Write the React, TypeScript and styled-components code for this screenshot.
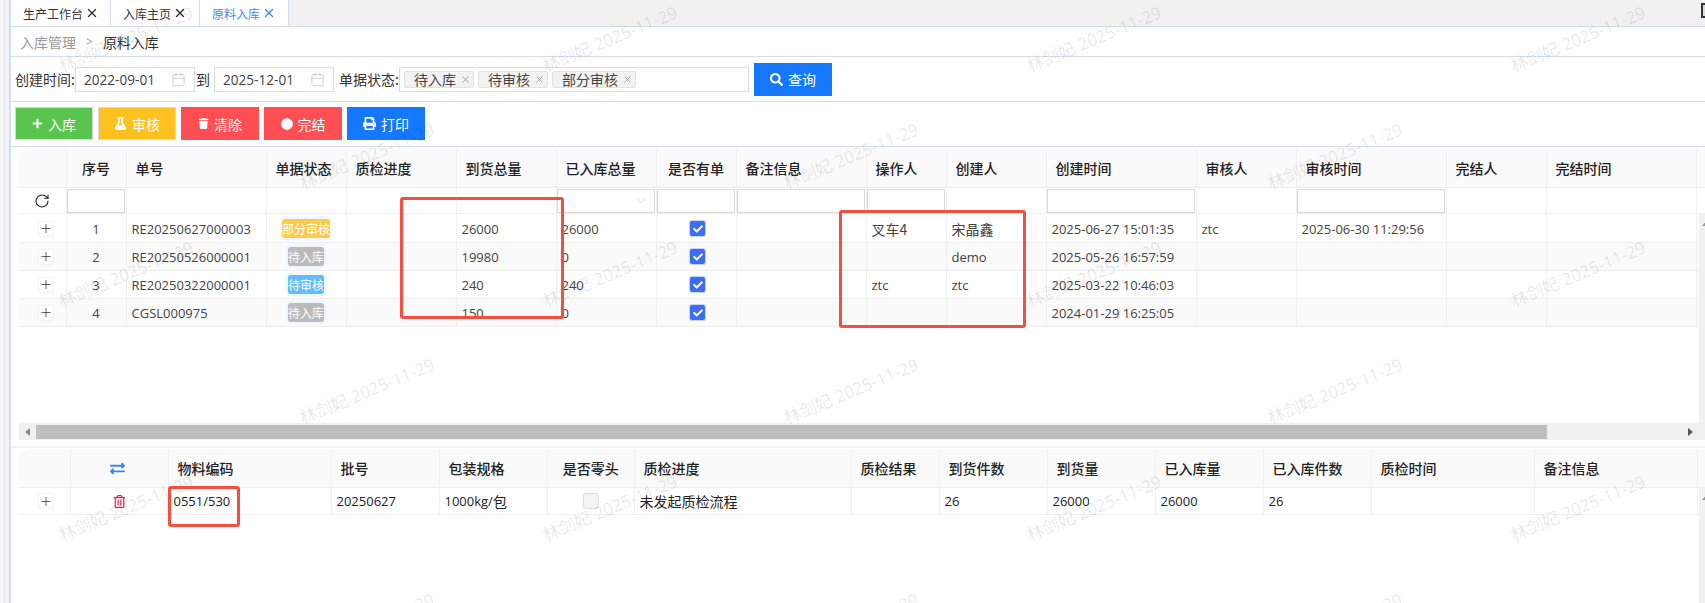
import React from 'react';
import styled, { createGlobalStyle } from 'styled-components';
import { X, Calendar, ChevronDown, RotateCw, Plus } from 'lucide-react';
import { FaPlus, FaFlask, FaTrash, FaCircle, FaPrint, FaSearch, FaExchangeAlt, FaRegTrashAlt, FaCheck } from 'react-icons/fa';

const latin = `"Open Sans", "Noto Sans CJK SC", sans-serif`;
const han = `"Noto Sans CJK SC", "Open Sans", sans-serif`;

const Global = createGlobalStyle`
  html, body { margin: 0; padding: 0; background: #fff; }
  body { font-family: ${latin}; color: #333; }
  * { box-sizing: border-box; }
`;

const Page = styled.div`
  position: relative;
  display: flex;
  width: 1705px;
  height: 603px;
  overflow: hidden;
`;
const Rail = styled.div`
  width: 9px;
  flex: none;
  background: linear-gradient(90deg, #f6f6f6 0 4px, #e3e8ef 4px 5px, #f4f6f9 5px 9px);
`;
const Main = styled.div`
  flex: 1;
  min-width: 0;
  display: flex;
  flex-direction: column;
  border-left: 2px solid #d3deeb;
`;
const TabBar = styled.div`
  display: flex;
  height: 27px;
  flex: none;
  background: #f1f1f1;
  border-bottom: 1px solid #d3deeb;
`;
const Tab = styled.div<{ $w: number; $active?: boolean }>`
  width: ${p => p.$w}px;
  display: flex;
  align-items: center;
  gap: 2px;
  padding-left: 12px;
  background: #fff;
  border-right: 1px solid #d3deeb;
  font: 12px ${han};
  color: ${p => (p.$active ? '#4a86e8' : '#333')};
`;
const WindowIcon = styled.div`
  margin-left: auto;
  margin-top: 3px;
  width: 4px;
  height: 15px;
  background: #dcdcdc;
  border: 2px solid #333;
  border-right: 0;
`;
const Breadcrumb = styled.div`
  display: flex;
  align-items: center;
  height: 30px;
  flex: none;
  padding-left: 9px;
  border-bottom: 1px solid #d3deeb;
  font: 14px ${han};
`;
const CrumbLink = styled.span`
  color: #999;
`;
const CrumbSep = styled.span`
  color: #999;
  font: 12px ${latin};
  margin: 0 10px;
`;
const CrumbNow = styled.span`
  color: #333;
`;
const FilterBar = styled.div`
  display: flex;
  align-items: center;
  height: 45px;
  flex: none;
  padding-left: 4px;
  border-bottom: 1px solid #d3deeb;
`;
const FilterLabel = styled.span<{ $w: number; $pl?: number }>`
  width: ${p => p.$w}px;
  padding-left: ${p => p.$pl ?? 0}px;
  flex: none;
  font: 14px ${han};
  color: #333;
  white-space: nowrap;
`;
const DateInput = styled.div`
  width: 120px;
  height: 25px;
  flex: none;
  display: flex;
  align-items: center;
  justify-content: space-between;
  padding: 0 8px;
  border: 1px solid #dcdcdc;
  font: 13.6px ${latin};
  color: #444;
  svg { color: #c4c4c4; }
`;
const TagSelect = styled.div`
  width: 350px;
  height: 25px;
  flex: none;
  display: flex;
  align-items: center;
  gap: 4px;
  padding-left: 4px;
  border: 1px solid #dcdcdc;
`;
const Tag = styled.span`
  display: flex;
  align-items: center;
  justify-content: space-between;
  height: 17px;
  padding: 0 2px 0 9px;
  gap: 4px;
  background: #f2f2f2;
  border: 1px solid #e2e2e2;
  border-radius: 2px;
  font: 14px ${han};
  color: #444;
  svg { color: #777; }
`;
const Btn = styled.button<{ $bg: string; $edge?: boolean }>`
  width: 78px;
  height: 33px;
  flex: none;
  display: flex;
  align-items: center;
  justify-content: center;
  gap: 5px;
  padding: 0;
  background: ${p => p.$bg};
  border: ${p => (p.$edge ? '1px solid #d8d8d8' : '0')};
  color: #fff;
  font: 14px ${han};
`;
const SearchBtn = styled(Btn)`
  margin-left: 5px;
`;
const ActionBar = styled.div`
  display: flex;
  align-items: center;
  gap: 5px;
  height: 45px;
  flex: none;
  padding: 0 0 1px 4px;
  border-bottom: 1px solid #d3deeb;
`;
const Frame = styled.div<{ $h?: number; $mt: number }>`
  margin: ${p => p.$mt}px 0 0 8px;
  ${p => (p.$h ? `height: ${p.$h}px;` : 'flex: 1; min-height: 0;')}
  display: flex;
  flex-direction: column;
  border-top-left-radius: 10px;
  overflow: hidden;
`;
const Row = styled.div<{ $cols: string; $h: number; $alt?: boolean }>`
  display: grid;
  grid-template-columns: ${p => p.$cols};
  height: ${p => p.$h}px;
  flex: none;
  background: ${p => (p.$alt ? '#fafafa' : '#fff')};
  border-bottom: 1px solid #eeeeee;
`;
const HeadRow = styled(Row)`
  background: #fafafa;
`;
const HeadCell = styled.div<{ $center?: boolean }>`
  display: flex;
  align-items: center;
  justify-content: ${p => (p.$center ? 'center' : 'flex-start')};
  padding-left: ${p => (p.$center ? 0 : 9)}px;
  border-right: 1px solid #f0f0f0;
  font: 500 14px ${han};
  color: #222;
  white-space: nowrap;
  overflow: hidden;
`;
const SwapCell = styled(HeadCell)`
  padding-right: 4px;
`;
const LastCell = styled.div``;
const FilterCell = styled.div`
  display: flex;
  align-items: center;
  justify-content: center;
  border-right: 1px solid #f0f0f0;
  padding: 1px 1px 1px 0;
`;
const FilterInput = styled.div`
  flex: 1;
  height: 24px;
  display: flex;
  align-items: center;
  justify-content: flex-end;
  padding-right: 6px;
  background: #fff;
  border: 1px solid #dbdbdb;
  svg { color: #c0c0c0; }
`;
const Cell = styled.div<{ $center?: boolean; $dark?: boolean }>`
  display: flex;
  align-items: center;
  justify-content: ${p => (p.$center ? 'center' : 'flex-start')};
  padding-left: ${p => (p.$center ? 0 : 5)}px;
  border-right: 1px solid #f0f0f0;
  font: 13px ${latin};
  color: ${p => (p.$dark ? '#222' : '#444')};
  white-space: nowrap;
  overflow: hidden;
`;
const ExpandCell = styled(Cell)`
  padding-left: 19px;
`;
const Han = styled.span`
  font: 14px ${han};
`;
const ExpandBtn = styled.span`
  width: 16px;
  height: 16px;
  display: flex;
  align-items: center;
  justify-content: center;
  border: 1px solid #f2f2f2;
  border-radius: 2px;
  background: #fff;
  color: #111;
`;
const Badge = styled.span<{ $bg: string }>`
  height: 19px;
  display: flex;
  align-items: center;
  border-radius: 3px;
  background: ${p => p.$bg};
  box-shadow: 0 0 0 2.5px #eef6fe;
  color: #fff;
  font: 12px ${han};
`;
const Check = styled.span<{ $on?: boolean }>`
  width: ${p => (p.$on ? 17 : 16)}px;
  height: ${p => (p.$on ? 17 : 16)}px;
  display: flex;
  align-items: center;
  justify-content: center;
  border-radius: 3px;
  margin-left: ${p => (p.$on ? 3 : 0)}px;
  background: ${p => (p.$on ? '#3b6df5' : '#f3f3f3')};
  border: 1px solid ${p => (p.$on ? '#c6d3f7' : '#dcdcdc')};
  color: #fff;
`;
const BodyWrap = styled.div`
  flex: 1;
  min-height: 0;
  display: flex;
`;
const BodyRows = styled.div<{ $pt?: number }>`
  flex: 1;
  min-width: 0;
  padding-top: ${p => p.$pt ?? 0}px;
`;
const VBar = styled.div`
  width: 6px;
  flex: none;
  background: #f1f1f1;
  overflow: hidden;
`;
const UpArrow = styled.div`
  margin: 7px 0 0 3px;
  width: 0;
  height: 0;
  border-left: 4px solid transparent;
  border-right: 4px solid transparent;
  border-bottom: 5px solid #999;
`;
const HBar = styled.div`
  height: 17px;
  flex: none;
  display: flex;
  align-items: center;
  background: #f1f1f1;
`;
const HButton = styled.div<{ $right?: boolean }>`
  width: 17px;
  flex: none;
  display: flex;
  justify-content: center;
  margin-left: ${p => (p.$right ? 'auto' : '0')};
  margin-right: ${p => (p.$right ? '6px' : '0')};
`;
const Tri = styled.span<{ $right?: boolean }>`
  width: 0;
  height: 0;
  border-top: 4.5px solid transparent;
  border-bottom: 4.5px solid transparent;
  ${p => (p.$right ? 'border-left: 5px solid #555;' : 'border-right: 5px solid #888;')}
`;
const HThumb = styled.div`
  width: 1511px;
  height: 14px;
  background: #bfbfbf;
`;
const Divider = styled.div`
  height: 2px;
  flex: none;
  margin: 6px 0 1px;
  background: #f1f1f1;
`;
const Marks = styled.div`
  position: absolute;
  inset: 0;
  pointer-events: none;
`;
const Mark = styled.span.attrs<{ $x: number; $y: number }>(p => ({
  style: { left: p.$x, top: p.$y - 24 },
}))<{ $x: number; $y: number }>`
  position: absolute;
  height: 24px;
  transform-origin: left bottom;
  transform: rotate(-22.5deg);
  font: 17px/24px ${latin};
  white-space: nowrap;
  color: rgba(0, 0, 0, 0.1);
`;
const Note = styled.div.attrs<{ $x: number; $y: number; $w: number; $h: number }>(p => ({
  style: { left: p.$x, top: p.$y, width: p.$w, height: p.$h },
}))<{ $x: number; $y: number; $w: number; $h: number }>`
  position: absolute;
  border: 3px solid #f44e3f;
  border-radius: 3px;
  pointer-events: none;
`;

const topCols = '47.5px 60px 140px 80px 110px 100px 100px 80px 130px 80px 100px 150px 100px 150px 100px 150px 1fr';
const subCols = '51.5px 98px 163px 108px 108.5px 86.5px 217px 88px 108px 108px 108px 108px 163px 163px 1fr';

const topHead = ['序号', '单号', '单据状态', '质检进度', '到货总量', '已入库总量', '是否有单', '备注信息', '操作人', '创建人', '创建时间', '审核人', '审核时间', '完结人', '完结时间'];
const subHead = ['物料编码', '批号', '包装规格', '是否零头', '质检进度', '质检结果', '到货件数', '到货量', '已入库量', '已入库件数', '质检时间', '备注信息'];

const filterShape = [
  'input', '', '', '', '', 'select', 'input', 'input', 'input', '', 'input', '', 'input', '', '',
];

type Rec = { no: number; code: string; status: string; color: string; total: string; done: string; op: string; opHan?: boolean; by: string; byHan?: boolean; at: string; audit: string; auditAt: string };
const records: Rec[] = [
  { no: 1, code: 'RE20250627000003', status: '部分审核', color: '#fdcb4a', total: '26000', done: '26000', op: '叉车4', opHan: true, by: '宋晶鑫', byHan: true, at: '2025-06-27 15:01:35', audit: 'ztc', auditAt: '2025-06-30 11:29:56' },
  { no: 2, code: 'RE20250526000001', status: '待入库', color: '#bbbbbb', total: '19980', done: '0', op: '', by: 'demo', at: '2025-05-26 16:57:59', audit: '', auditAt: '' },
  { no: 3, code: 'RE20250322000001', status: '待审核', color: '#62bcff', total: '240', done: '240', op: 'ztc', by: 'ztc', at: '2025-03-22 10:46:03', audit: '', auditAt: '' },
  { no: 4, code: 'CGSL000975', status: '待入库', color: '#bbbbbb', total: '150', done: '0', op: '', by: '', at: '2024-01-29 16:25:05', audit: '', auditAt: '' },
];

const subRow: React.ReactNode[] = [
  '20250627',
  <>1000kg/<Han>包</Han></>,
];

const centeredHead = (t: string) => t === '序号' || t === '是否有单' || t === '是否零头';

const watermarks: { x: number; y: number }[] = [];
for (let k = 0; k < 6; k++) {
  const columns = k % 2 ? [305, 789, 1273] : [64, 548, 1032, 1516];
  for (const x of columns) {
    watermarks.push({ x, y: 78 + 117.3 * k });
  }
}

export default function App() {
  return (
    <Page>
      <Global />
      <Rail />
      <Main>
        <TabBar>
          <Tab $w={100}>生产工作台 <X size={14} strokeWidth={2.4} /></Tab>
          <Tab $w={89}>入库主页 <X size={14} strokeWidth={2.4} /></Tab>
          <Tab $w={89} $active>原料入库 <X size={14} strokeWidth={2.4} /></Tab>
          <WindowIcon />
        </TabBar>
        <Breadcrumb>
          <CrumbLink>入库管理</CrumbLink>
          <CrumbSep>&gt;</CrumbSep>
          <CrumbNow>原料入库</CrumbNow>
        </Breadcrumb>
        <FilterBar>
          <FilterLabel $w={60}>创建时间:</FilterLabel>
          <DateInput>2022-09-01<Calendar size={15} strokeWidth={1.2} /></DateInput>
          <FilterLabel $w={19} $pl={1}>到</FilterLabel>
          <DateInput>2025-12-01<Calendar size={15} strokeWidth={1.2} /></DateInput>
          <FilterLabel $w={65} $pl={5}>单据状态:</FilterLabel>
          <TagSelect>
            <Tag>待入库<X size={11} strokeWidth={1.4} /></Tag>
            <Tag>待审核<X size={11} strokeWidth={1.4} /></Tag>
            <Tag>部分审核<X size={11} strokeWidth={1.4} /></Tag>
          </TagSelect>
          <SearchBtn $bg="#1677ff"><FaSearch size={13} />查询</SearchBtn>
        </FilterBar>
        <ActionBar>
          <Btn $bg="#5ac54e" $edge><FaPlus size={11} />入库</Btn>
          <Btn $bg="#fdc21f" $edge><FaFlask size={13} />审核</Btn>
          <Btn $bg="#ff4f55"><FaTrash size={11} />清除</Btn>
          <Btn $bg="#ff4f55"><FaCircle size={12} />完结</Btn>
          <Btn $bg="#1677ff"><FaPrint size={13} />打印</Btn>
        </ActionBar>

        <Frame $h={291} $mt={2}>
          <HeadRow $cols={topCols} $h={39}>
            <HeadCell />
            {topHead.map(t => <HeadCell key={t} $center={centeredHead(t)}>{t}</HeadCell>)}
            <LastCell />
          </HeadRow>
          <Row $cols={topCols} $h={26}>
            <Cell $center><RotateCw size={16} strokeWidth={1.6} color="#222" /></Cell>
            {filterShape.map((kind, i) => (
              <FilterCell key={i}>
                {kind && <FilterInput>{kind === 'select' && <ChevronDown size={14} strokeWidth={1} />}</FilterInput>}
              </FilterCell>
            ))}
            <LastCell />
          </Row>
          <BodyWrap>
            <BodyRows $pt={1}>
              {records.map((r, i) => (
                <Row key={r.no} $cols={topCols} $h={28} $alt={i % 2 === 1}>
                  <ExpandCell><ExpandBtn><Plus size={15} strokeWidth={1.1} /></ExpandBtn></ExpandCell>
                  <Cell $center>{r.no}</Cell>
                  <Cell>{r.code}</Cell>
                  <Cell $center><Badge $bg={r.color}>{r.status}</Badge></Cell>
                  <Cell />
                  <Cell>{r.total}</Cell>
                  <Cell>{r.done}</Cell>
                  <Cell $center><Check $on><FaCheck size={10} /></Check></Cell>
                  <Cell />
                  <Cell>{r.opHan ? <Han>{r.op}</Han> : r.op}</Cell>
                  <Cell>{r.byHan ? <Han>{r.by}</Han> : r.by}</Cell>
                  <Cell>{r.at}</Cell>
                  <Cell>{r.audit}</Cell>
                  <Cell>{r.auditAt}</Cell>
                  <Cell />
                  <Cell />
                  <LastCell />
                </Row>
              ))}
            </BodyRows>
            <VBar><UpArrow /></VBar>
          </BodyWrap>
          <HBar>
            <HButton><Tri /></HButton>
            <HThumb />
            <HButton $right><Tri $right /></HButton>
          </HBar>
        </Frame>

        <Divider />

        <Frame $mt={0}>
          <HeadRow $cols={subCols} $h={39}>
            <HeadCell />
            <SwapCell $center><FaExchangeAlt size={15} color="#3b82f6" /></SwapCell>
            {subHead.map((t, i) => <HeadCell key={i} $center={centeredHead(t)}>{t}</HeadCell>)}
            <LastCell />
          </HeadRow>
          <BodyWrap>
            <BodyRows>
              <Row $cols={subCols} $h={27}>
                <ExpandCell><ExpandBtn><Plus size={15} strokeWidth={1.1} /></ExpandBtn></ExpandCell>
                <Cell $center><FaRegTrashAlt size={13} color="#ec1c4b" /></Cell>
                <Cell $dark>0551/530</Cell>
                {subRow.map((v, i) => <Cell key={i} $dark>{v}</Cell>)}
                <Cell $center><Check /></Cell>
                <Cell $dark><Han>未发起质检流程</Han></Cell>
                <Cell />
                <Cell $dark>26</Cell>
                <Cell $dark>26000</Cell>
                <Cell $dark>26000</Cell>
                <Cell $dark>26</Cell>
                <Cell />
                <Cell />
                <LastCell />
              </Row>
            </BodyRows>
            <VBar><UpArrow /></VBar>
          </BodyWrap>
        </Frame>
      </Main>

      <Marks>
        {watermarks.map((m, i) => <Mark key={i} $x={m.x} $y={m.y}>林剑妃 2025-11-29</Mark>)}
      </Marks>
      <Note $x={400} $y={196.5} $w={164} $h={122} />
      <Note $x={838.5} $y={210} $w={187} $h={118} />
      <Note $x={167.5} $y={486} $w={72} $h={41} />
    </Page>
  );
}
